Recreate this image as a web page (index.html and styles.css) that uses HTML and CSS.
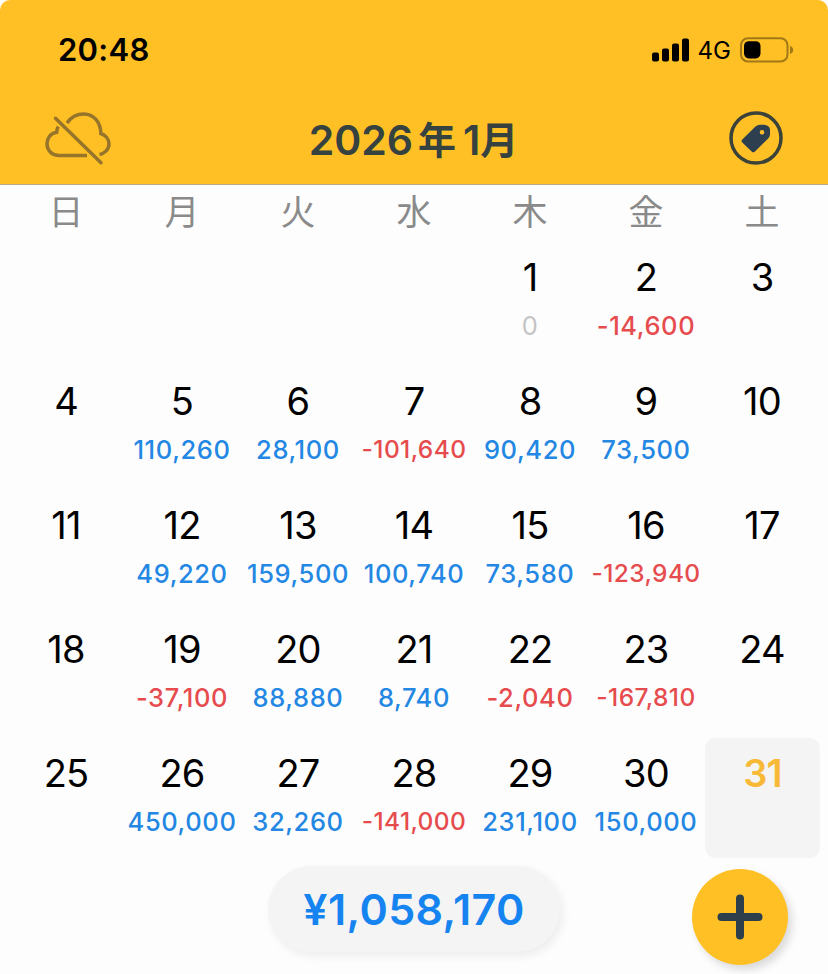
FILE: index.html
```
<!DOCTYPE html>
<html lang="ja">
<head>
    <meta charset="UTF-8">
    <meta name="viewport" content="width=device-width, initial-scale=1.0">
    <title>2026年1月</title>
    <link rel="stylesheet" href="styles.css">
</head>
<body>
    <header class="header">
        <div class="status-bar">
            <span class="time">20:48</span>
            <div class="status-icons">
                <svg class="signal" width="38" height="24" viewBox="0 0 38 24">
                    <rect x="0" y="14.5" width="7" height="9" rx="2"/>
                    <rect x="10" y="10.5" width="7" height="13" rx="2"/>
                    <rect x="20" y="5.5" width="7" height="18" rx="2"/>
                    <rect x="30" y="0.5" width="7" height="23" rx="2"/>
                </svg>
                <span class="network">4G</span>
                <svg class="battery" width="54" height="26" viewBox="0 0 54 26">
                    <rect x="1" y="1.2" width="46.5" height="23.4" rx="7" fill="none" stroke="#a17817" stroke-width="2"/>
                    <rect x="4" y="4.2" width="16.5" height="17.2" rx="4.8"/>
                    <path d="M50 9c2 .6 3.2 2.2 3.2 4s-1.2 3.4-3.2 4z" fill="#a17817"/>
                </svg>
            </div>
        </div>
        <div class="nav-bar">
            <svg class="cloud" width="68" height="56" viewBox="0 0 68 56" fill="none" stroke="#96742a" stroke-width="3.5">
                <path d="M13.2 16.5C12.2 18.5 11.8 20.2 11.7 22.2C5.8 23 2 28 2 33.8C2 40.5 7.3 45.5 14 45.5H42"/>
                <path d="M22 13C26 7 31.5 4 38.8 4C48.5 4 55.8 12 55.8 23.5C60.5 25 64 29.2 64 34C64 39.2 59.6 43.5 54.5 44.5"/>
                <path d="M10.5 8.3L56 52.7" stroke-linecap="round"/>
            </svg>
            <h1>2026<span class="kanji year">年</span>1<span class="kanji">月</span></h1>
            <svg class="tag" width="54" height="54" viewBox="0 0 54 54">
                <circle cx="27" cy="27" r="25" fill="none" stroke="#3b423a" stroke-width="3.5"/>
                <path fill="#2e3f50" fill-rule="evenodd" d="M13.3 28.5L26.5 15.6Q28.5 13.7 31 13.7H35.5Q41 14.5 41 19V23.5Q41 25.5 39.2 27.4L26 40.5Q24.3 42.2 22.6 40.5L13.3 31.5Q11.8 30 13.3 28.5ZM33 19a2.3 2.3 0 1 0 0 4.6a2.3 2.3 0 1 0 0-4.6Z"/>
            </svg>
        </div>
    </header>

    <div class="weekdays">
        <span>日</span><span>月</span><span>火</span><span>水</span><span>木</span><span>金</span><span>土</span>
    </div>
    <div class="calendar" id="calendar"></div>

    <div class="footer">
        <div class="total">¥1,058,170</div>
        <button class="add-button" aria-label="追加">
            <svg width="46" height="46" viewBox="0 0 46 46" stroke="#2e3f4c" stroke-width="8" stroke-linecap="round">
                <path d="M23 4.5v37M4.5 23h37"/>
            </svg>
        </button>
    </div>

    <script>
        const firstDay = 4;
        const daysInMonth = 31;
        const selectedDay = 31;
        const amounts = {
            1: 0, 2: -14600,
            5: 110260, 6: 28100, 7: -101640, 8: 90420, 9: 73500,
            12: 49220, 13: 159500, 14: 100740, 15: 73580, 16: -123940,
            19: -37100, 20: 88880, 21: 8740, 22: -2040, 23: -167810,
            26: 450000, 27: 32260, 28: -141000, 29: 231100, 30: 150000
        };

        function renderCalendar() {
            const calendar = document.getElementById('calendar');
            for (let i = 0; i < firstDay; i++) {
                calendar.appendChild(document.createElement('div'));
            }
            for (let day = 1; day <= daysInMonth; day++) {
                const dayDiv = document.createElement('div');
                dayDiv.classList.add('day');
                dayDiv.classList.toggle('selected', day === selectedDay);
                dayDiv.innerHTML = `<span class="number">${day}</span>`;
                if (day in amounts) {
                    const value = amounts[day];
                    const span = document.createElement('span');
                    span.classList.add('amount');
                    if (value > 0) span.classList.add('plus');
                    if (value < 0) span.classList.add('minus');
                    if (value <= -100000) span.classList.add('long');
                    span.textContent = value.toLocaleString('en-US');
                    dayDiv.appendChild(span);
                }
                calendar.appendChild(dayDiv);
            }
        }

        renderCalendar();
    </script>
</body>
</html>
```
FILE: styles.css
```
* {
    box-sizing: border-box;
}
body {
    margin: 0;
    height: 974px;
    overflow: hidden;
    background: #fdfdfd;
    color: #000;
    font-family: Inter, "Noto Sans CJK JP", sans-serif;
}
.header {
    height: 185px;
    background: #ffc025;
    border-bottom: 1px solid #b9a98a;
    border-radius: 10px 10px 0 0;
}
.status-bar {
    display: flex;
    justify-content: space-between;
    align-items: center;
    height: 99px;
    padding: 0 34px 0 58px;
}
.time {
    font-size: 31px;
    font-weight: 600;
    letter-spacing: 0.3px;
}
.status-icons {
    display: flex;
    align-items: center;
}
.network {
    margin: 2px 9px 0 8px;
    font-size: 24px;
    line-height: 30px;
}
.signal {
    margin-left: 1px;
}
.nav-bar {
    display: grid;
    grid-template-columns: 68px 1fr 54px;
    align-items: center;
    height: 78px;
    padding: 0 45px;
}
h1 {
    margin: 4px 0 0 -15px;
    color: #36423f;
    font-size: 41px;
    font-weight: 600;
    line-height: 50px;
    text-align: center;
    white-space: nowrap;
}
.kanji {
    font-size: 38px;
    line-height: 1;
    vertical-align: 1px;
}
.year {
    margin: 0 7px 0 5px;
}
.weekdays {
    display: grid;
    grid-template-columns: repeat(7, 116px);
    height: 57px;
    padding-left: 8px;
    color: #8a8a8a;
    font-family: "Noto Sans CJK JP", sans-serif;
    font-size: 35px;
    line-height: 49px;
    text-align: center;
}
.calendar {
    display: grid;
    grid-template-columns: repeat(7, 116px);
    grid-auto-rows: 124px;
    padding-left: 8px;
}
.day {
    display: flex;
    flex-direction: column;
    align-items: center;
    height: 120px;
    padding-top: 12px;
}
.number {
    font-size: 38px;
    line-height: 46px;
    letter-spacing: -0.8px;
}
.amount {
    margin-top: 10px;
    color: #c4c4c4;
    font-size: 25.5px;
    line-height: 31px;
    letter-spacing: 0.6px;
    white-space: nowrap;
}
.plus {
    color: #2387e3;
    font-weight: 500;
}
.minus {
    color: #e64c4e;
    font-weight: 500;
}
.long {
    font-size: 24.5px;
    letter-spacing: 0.4px;
}
.selected {
    width: 115px;
    margin-left: 1px;
    border-radius: 10px;
    background: #f4f4f4;
}
.selected .number {
    color: #f8ba36;
    font-weight: 600;
}
.footer {
    display: grid;
    grid-template-columns: 268px 292px 1fr 96px 40px;
    align-items: start;
    padding-top: 4px;
}
.total {
    grid-column: 2;
    height: 86px;
    border-radius: 43px;
    background: #f4f4f4;
    box-shadow: 3px 4px 10px rgba(0, 0, 0, 0.07);
    color: #1684f0;
    font-size: 43px;
    font-weight: 600;
    line-height: 87px;
    letter-spacing: 0.4px;
    text-align: center;
}
.add-button {
    grid-column: 4;
    display: flex;
    align-items: center;
    justify-content: center;
    width: 96px;
    height: 96px;
    margin-top: 3px;
    padding: 0;
    border: none;
    border-radius: 50%;
    background: #ffc025;
    box-shadow: 4px 5px 9px rgba(0, 0, 0, 0.14);
}
```
